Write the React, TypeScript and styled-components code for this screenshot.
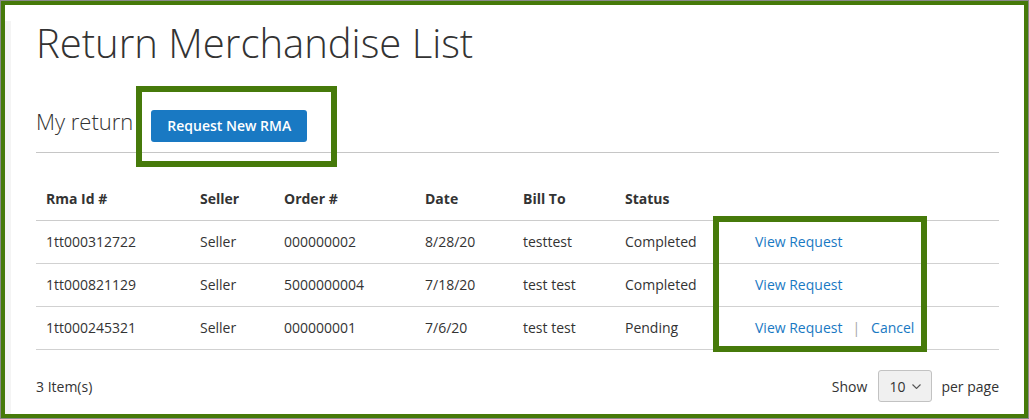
import React from "react";
import styled, { createGlobalStyle } from "styled-components";

const Global = createGlobalStyle`
  html, body { margin: 0; padding: 0; background: #fff; }
  body { font-family: "Open Sans", "DejaVu Sans", sans-serif; color: #333; }
  * { box-sizing: border-box; }
`;

const Frame = styled.div`
  width: 1029px;
  height: 419px;
  border: 1px solid #8a8a8a;
`;

const Canvas = styled.div`
  height: 100%;
  border: 4px solid #467a0a;
  display: flex;
  background: #fff;
`;

const Strip = styled.div`
  width: 6px;
  margin-top: 16px;
  background: #f4f4f4;
  flex: none;
`;

const Main = styled.main`
  flex: 1;
  padding: 14px 25px 0 25px;
  display: flex;
  flex-direction: column;
`;

const Title = styled.h1`
  margin: 0;
  font-size: 40px;
  line-height: 48px;
  font-weight: 300;
  color: #333;
`;

const BlockTitle = styled.div`
  margin-top: 38px;
  display: flex;
  align-items: flex-start;
  gap: 18px;
  padding-bottom: 10px;
  border-bottom: 1px solid #c6c6c6;
`;

const BlockName = styled.strong`
  font-size: 22px;
  font-weight: 300;
  line-height: 32px;
`;

const Anchor = styled.div`
  position: relative;
  display: inline-flex;
  margin-top: 5px;
`;

const Highlight = styled.div<{ $top: number; $left: number; $w: number; $h: number }>`
  position: absolute;
  top: ${(p) => p.$top}px;
  left: ${(p) => p.$left}px;
  width: ${(p) => p.$w}px;
  height: ${(p) => p.$h}px;
  border: 6px solid #467a0a;
  pointer-events: none;
`;

const PrimaryButton = styled.button`
  height: 32px;
  padding: 0 16px;
  border: none;
  border-radius: 3px;
  background: #1979c3;
  color: #fff;
  font-family: "Open Sans", sans-serif;
  font-size: 14px;
  font-weight: 600;
  line-height: 32px;
  cursor: pointer;
`;

const TableWrap = styled.div`
  position: relative;
  margin-top: 25px;
`;

const Table = styled.table`
  width: 100%;
  border-collapse: collapse;
  table-layout: fixed;
  font-size: 14px;
  line-height: 20px;
`;

const Th = styled.th<{ $w?: number }>`
  text-align: left;
  font-weight: 700;
  padding: 11px 10px;
  border-bottom: 1px solid #cccccc;
  width: ${(p) => (p.$w ? `${p.$w}px` : "auto")};
  color: #333;
`;

const Td = styled.td`
  padding: 11px 10px;
  border-bottom: 1px solid #d1d1d1;
  color: #333;
  white-space: nowrap;
`;

const Link = styled.a`
  color: #1979c3;
  text-decoration: none;
`;

const Sep = styled.span`
  color: #a6a6a6;
  margin: 0 11px 0 10px;
`;

const Footer = styled.div`
  margin-top: 20px;
  display: flex;
  align-items: center;
  justify-content: space-between;
  font-size: 14px;
`;

const Limiter = styled.div`
  display: flex;
  align-items: center;
  gap: 11px;
`;

const PerPage = styled.span`
  margin-left: -2px;
`;

const SelectBox = styled.div`
  width: 54px;
  height: 32px;
  border: 1px solid #c2c2c2;
  border-radius: 3px;
  background: #f0f0f0;
  display: flex;
  align-items: center;
  padding-left: 10px;
  gap: 7px;
  font-size: 14px;
  color: #333;
`;

const rows = [
  { id: "1tt000312722", seller: "Seller", order: "000000002", date: "8/28/20", bill: "testtest", status: "Completed", cancel: false },
  { id: "1tt000821129", seller: "Seller", order: "5000000004", date: "7/18/20", bill: "test test", status: "Completed", cancel: false },
  { id: "1tt000245321", seller: "Seller", order: "000000001", date: "7/6/20", bill: "test test", status: "Pending", cancel: true },
];

export default function App() {
  return (
    <>
      <Global />
      <Frame>
        <Canvas>
          <Strip />
          <Main>
            <Title>Return Merchandise List</Title>
            <BlockTitle>
              <BlockName>My return</BlockName>
              <Anchor>
                <PrimaryButton>Request New RMA</PrimaryButton>
                <Highlight $top={-24} $left={-15} $w={201} $h={81} />
              </Anchor>
            </BlockTitle>
            <TableWrap>
              <Table>
                <thead>
                  <tr>
                    <Th $w={154}>Rma Id #</Th>
                    <Th $w={84}>Seller</Th>
                    <Th $w={141}>Order #</Th>
                    <Th $w={98}>Date</Th>
                    <Th $w={102}>Bill To</Th>
                    <Th $w={130}>Status</Th>
                    <Th />
                  </tr>
                </thead>
                <tbody>
                  {rows.map((r) => (
                    <tr key={r.id}>
                      <Td>{r.id}</Td>
                      <Td>{r.seller}</Td>
                      <Td>{r.order}</Td>
                      <Td>{r.date}</Td>
                      <Td>{r.bill}</Td>
                      <Td>{r.status}</Td>
                      <Td>
                        <Link href="#">View Request</Link>
                        {r.cancel && (
                          <>
                            <Sep>|</Sep>
                            <Link href="#">Cancel</Link>
                          </>
                        )}
                      </Td>
                    </tr>
                  ))}
                </tbody>
              </Table>
              <Highlight $top={38} $left={677} $w={214} $h={136} />
            </TableWrap>
            <Footer>
              <span>3 Item(s)</span>
              <Limiter>
                <span>Show</span>
                <SelectBox>
                  <span>10</span>
                  <svg width="9" height="5" viewBox="0 0 9 5" fill="none">
                    <path d="M0.5 0.5l4 4 4-4" stroke="#555" strokeWidth="1.1" />
                  </svg>
                </SelectBox>
                <PerPage>per page</PerPage>
              </Limiter>
            </Footer>
          </Main>
        </Canvas>
      </Frame>
    </>
  );
}
